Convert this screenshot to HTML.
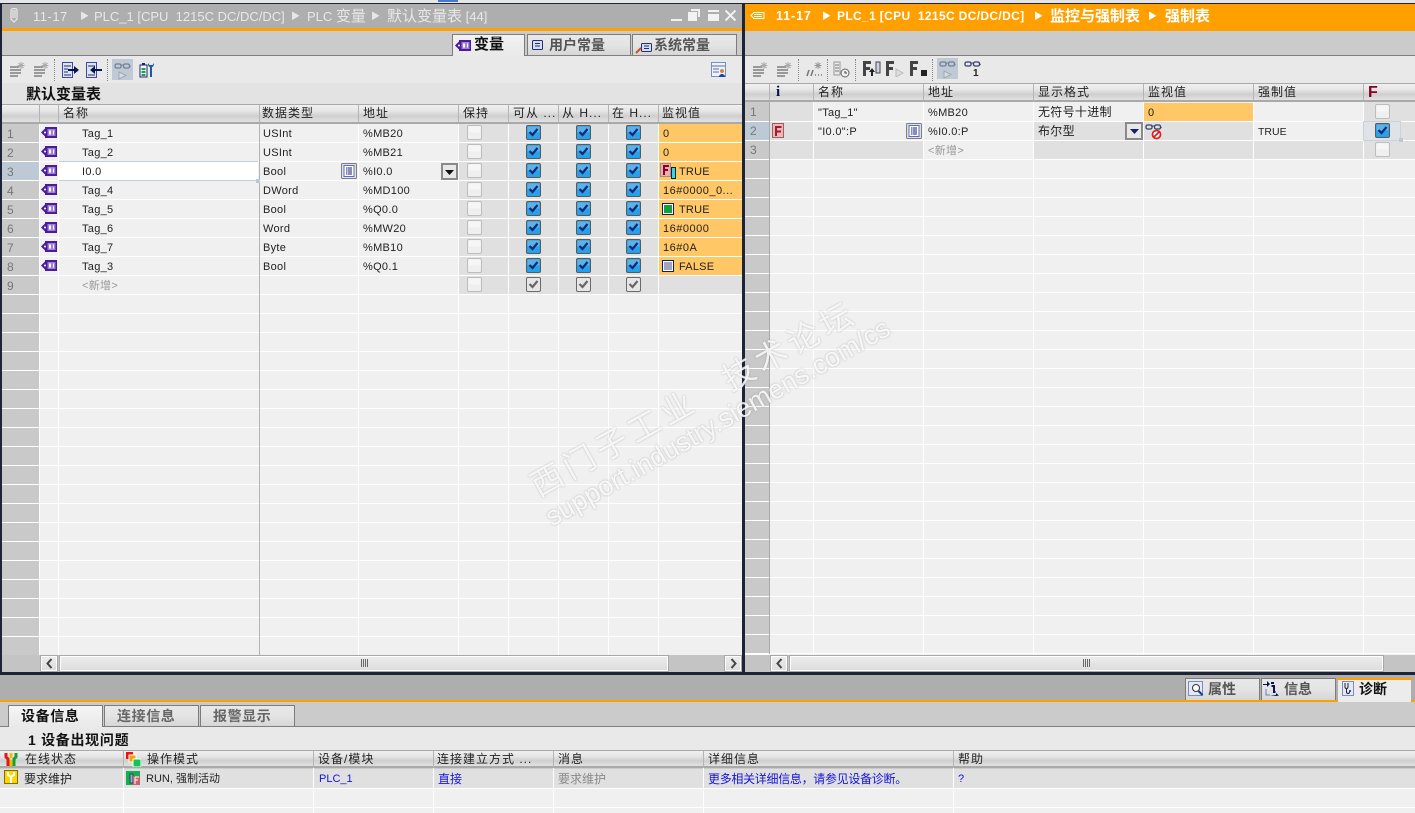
<!DOCTYPE html>
<html><head><meta charset="utf-8"><style>
html,body{margin:0;padding:0;width:1415px;height:813px;overflow:hidden;background:#cbcbcb}
body{position:relative;font:11px/19px "Liberation Sans","WenQuanYi Zen Hei","Noto Sans CJK SC",sans-serif;color:#222}
.a,.col,svg.a{position:absolute}
.z{font-family:"WenQuanYi Zen Hei","Noto Sans CJK SC",sans-serif}
.col{top:125px;white-space:nowrap;letter-spacing:.3px}
.col>*{display:block;height:19px}
.h{position:absolute;height:17px;line-height:17px;font-size:12px;letter-spacing:1px;white-space:nowrap;font-family:"Liberation Sans","WenQuanYi Zen Hei",sans-serif;color:#222}
.hb{position:absolute;height:17px;background:linear-gradient(#f0f0f0,#e6e6e6 35%,#cfcfcf 65%,#e2e2e2);border-top:1px solid #a9a9a9;border-bottom:2px solid #a9a9a9}
.v{position:absolute;width:1px;background:#fff}
.vh{position:absolute;width:1px;background:#b4b4b4}
.s{position:absolute;background:#e0e0e0}
.t{position:absolute;white-space:nowrap}
.title{position:absolute;top:7px;height:19px;line-height:19px;font-size:13px;white-space:nowrap;color:#e8e8e8}
.title b,.title i{font-size:15px;font-style:normal;font-weight:normal}
.rt{color:#fff;font-weight:bold}
.rt i{font-weight:bold}
.sep{position:absolute;width:1px;height:22px;top:59px;border-left:1px dotted #888}
.tab{position:absolute;box-sizing:border-box;background:linear-gradient(#e8e8e8,#e4e4e4 50%,#d6d6d6);border:1px solid #7c7c7c;border-bottom:0;font-size:14px;line-height:20px;color:#555;font-weight:bold;white-space:nowrap}
.btn{position:absolute;width:15px;height:15px;box-sizing:border-box;border:2px solid #8a8a8a;background:#e8e8e8}
.sb{position:absolute;box-sizing:border-box;height:17px;border:1px solid #a8a8a8;box-shadow:inset 0 0 0 1px #fff;background:linear-gradient(#ededed,#dcdcdc)}
</style></head><body>
<svg width="0" height="0" style="position:absolute"><defs>
<symbol id="ck" viewBox="0 0 15 15"><rect x=".5" y=".5" width="14" height="14" rx="1.5" fill="#1f9fe8" stroke="#5a5a5a"/><rect x="1.5" y="1.5" width="12" height="6" fill="#5fb0e6"/><rect x="1.5" y="8" width="12" height="5.5" fill="#2aa0e8"/><path d="M3.500 7l3 3 5-6" fill="none" stroke="#0a2a78" stroke-width="2.2"/></symbol>
<symbol id="gk" viewBox="0 0 15 15"><rect x=".5" y=".5" width="14" height="14" rx="1.5" fill="#e6e6e6" stroke="#6a6a6a"/><path d="M3.500 7l3 3 5-6" fill="none" stroke="#666" stroke-width="2.2"/></symbol>
<symbol id="em" viewBox="0 0 15 15"><rect x=".5" y=".5" width="14" height="14" rx="1.5" fill="#efefef" stroke="#bdbdbd"/><rect x="1.5" y="1.5" width="12" height="6" fill="#f6f6f6"/></symbol>
<symbol id="tag" viewBox="0 0 16 11"><path d="M0 5.500L4 1.500V0h12v11H4V9.500z" fill="#4a1d96"/><circle cx="4" cy="5.500" r="1" fill="#fff"/><rect x="6.500" y="2" width="8" height="7" fill="#a080d8"/><path d="M8 3.500h2v4H8zM12 3.500h1v4h-1z" fill="#fff"/></symbol>
<symbol id="add" viewBox="0 0 17 17"><path d="M1 6h9M1 9h11M1 12h11M1 15h8" stroke="#999" stroke-width="2" fill="none"/><path d="M12 1v7M8.500 4.500h7M9.500 2l5 5M14.500 2l-5 5" stroke="#aaa" fill="none"/></symbol>
<symbol id="gl" viewBox="0 0 17 9"><rect x="1" y="2" width="6" height="4" rx="1.500" fill="none" stroke="#36406c" stroke-width="1.300"/><rect x="9.500" y="2" width="6" height="4" rx="1.500" fill="none" stroke="#36406c" stroke-width="1.300"/><path d="M7 3h3M15 3l1.500 2" stroke="#36406c"/></symbol>
<symbol id="lst" viewBox="0 0 16 16"><rect x=".5" y=".5" width="15" height="15" rx="1" fill="#e0e0e0" stroke="#7f7f7f"/><rect x="3" y="2.500" width="10" height="11" fill="#fff" stroke="#5a6acb"/><path d="M5 5h6M5 7h6M5 9h6M5 11h6" stroke="#141e6e" stroke-dasharray="1 .5 4 0"/></symbol>
</defs></svg>

<!-- frame -->
<div class="a" style="left:0;top:0;width:1415px;height:3px;background:#e6e6e6"></div>
<div class="a" style="left:438px;top:0;width:20px;height:2px;background:#4a78c8"></div>
<div class="a" style="left:0;top:3px;width:1415px;height:1px;background:#1e2438"></div>
<div class="a" style="left:0;top:3px;width:2px;height:672px;background:#1e2438"></div>
<div class="a" style="left:742px;top:3px;width:3px;height:672px;background:#1e2438"></div>
<div class="a" style="left:0;top:672px;width:1415px;height:3px;background:#1e2438"></div>

<!-- LEFT title -->
<div class="a" style="left:2px;top:4px;width:740px;height:24px;background:#aeaeae"></div>
<div class="a" style="left:2px;top:28px;width:740px;height:3px;background:#ffa000"></div>
<div class="a" style="left:2px;top:31px;width:740px;height:24px;background:#cbcbcb"></div>
<div class="a" style="left:2px;top:55px;width:740px;height:1px;background:#7f7f7f"></div>
<div class="a" style="left:2px;top:56px;width:740px;height:27px;background:#e9e9e9"></div>
<div class="a" style="left:2px;top:83px;width:740px;height:22px;background:#e3e3e3"></div>
<svg class="a" style="left:9px;top:7px" width="10" height="17" viewBox="0 0 10 17"><path d="M2 3v9l3 3 3-3V3c0-2-6-2-6 0zM4 3v8M6 3v8" fill="none" stroke="#e8e8e8" stroke-width="1.200"/></svg>
<div class="title" style="left:33px;letter-spacing:.5px">11-17</div>
<div class="title" style="left:80px;font-size:9px">&#9654;</div>
<div class="title" style="left:94px">PLC_1 [CPU&nbsp; 1215C DC/DC/DC]</div>
<div class="title" style="left:291px;font-size:9px">&#9654;</div>
<div class="title" style="left:307px">PLC <b>变量</b></div>
<div class="title" style="left:371px;font-size:9px">&#9654;</div>
<div class="title" style="left:387px"><b>默认变量表</b> [44]</div>
<div class="a" style="left:671px;top:19px;width:11px;height:2px;background:#f2f2f2"></div>
<svg class="a" style="left:688px;top:9px" width="12" height="12" viewBox="0 0 12 12"><path d="M3 0h9v8h-2V2H3zM0 3h9v9H0z" fill="#f2f2f2"/></svg>
<svg class="a" style="left:708px;top:10px" width="11" height="11" viewBox="0 0 11 11"><path d="M0 0h11v11H0zM0 2v2h11V2z" fill="#f2f2f2" fill-rule="evenodd"/></svg>
<svg class="a" style="left:725px;top:10px" width="11" height="11" viewBox="0 0 11 11"><path d="M.5.500l10 10M10.500.500l-10 10" stroke="#f2f2f2" stroke-width="2"/></svg>

<!-- left tabs -->
<div class="tab" style="left:452px;top:34px;width:73px;height:22px;background:linear-gradient(#f2f2f2,#e9e9e9);color:#111;padding-left:21px;font-size:15px;z-index:2">变量</div>
<svg class="a" style="left:455px;top:40px;z-index:3" width="16" height="11"><use href="#tag"/></svg>
<div class="tab" style="left:527px;top:34px;width:104px;height:21px;padding-left:21px">用户常量</div>
<svg class="a" style="left:532px;top:40px" width="11" height="10" viewBox="0 0 11 10"><rect x=".5" y=".5" width="10" height="9" rx="1" fill="#d5dcf4" stroke="#20306e"/><path d="M3 3.500h5M3 6h5" stroke="#20306e"/></svg>
<div class="tab" style="left:632px;top:34px;width:105px;height:21px;padding-left:21px">系统常量</div>
<svg class="a" style="left:635px;top:43px" width="17" height="11" viewBox="0 0 17 11"><rect x="6.500" y=".5" width="10" height="8" rx="1" fill="#d5dcf4" stroke="#20306e"/><path d="M9 3h5M9 5.500h5" stroke="#20306e"/><path d="M1 10l5-5" stroke="#c9521a" stroke-width="2"/></svg>

<!-- left toolbar -->
<svg class="a" style="left:9px;top:61px" width="17" height="17"><use href="#add"/></svg>
<svg class="a" style="left:33px;top:61px" width="17" height="17"><use href="#add"/></svg>
<div class="sep" style="left:54px"></div>
<svg class="a" style="left:62px;top:62px" width="17" height="16" viewBox="0 0 17 16"><rect x=".5" y=".5" width="10" height="15" fill="#dfe5f8" stroke="#3c4a9a"/><path d="M2 4h7M2 7h4M2 10h4M2 13h7" stroke="#1e2a6e"/><path d="M6 7h6V4l5 4-5 4V9H6z" fill="#0a1450"/></svg>
<svg class="a" style="left:86px;top:62px" width="17" height="16" viewBox="0 0 17 16"><rect x=".5" y=".5" width="10" height="15" fill="#dfe5f8" stroke="#3c4a9a"/><path d="M2 4h7M2 13h7" stroke="#1e2a6e"/><path d="M16 7H9V4L4 8l5 4V9h7z" fill="#0a1450"/></svg>
<div class="sep" style="left:107px"></div>
<div class="a" style="left:112px;top:59px;width:21px;height:21px;background:#bfcad4"></div>
<svg class="a" style="left:114px;top:62px" width="17" height="9" opacity=".55"><use href="#gl"/></svg>
<svg class="a" style="left:118px;top:71px" width="9" height="9" viewBox="0 0 9 9"><path d="M1 1l7 3.500L1 8z" fill="#d8dde4" stroke="#9ca8b4"/></svg>
<svg class="a" style="left:139px;top:62px" width="16" height="16" viewBox="0 0 16 16"><rect x="1" y="3" width="7" height="12" fill="#fff" stroke="#1a2468"/><path d="M2.500 6h4v2h-4zM2.500 9h4v2h-4zM2.500 12h4v2h-4z" fill="#1aa050"/><path d="M3 1h3v2H3z" fill="#1a2468"/><path d="M9 1c0 3 1 4 2 4v10h2V5c1 0 2-1 2-4l-1.500 2h-3z" fill="#1a5aa0"/></svg>
<svg class="a" style="left:711px;top:62px" width="16" height="16" viewBox="0 0 16 16"><rect x=".5" y=".5" width="14" height="14" fill="#f0f3fb" stroke="#7c8cc0"/><path d="M1 4h13M2 7h6M2 10h6" stroke="#5a6ab0"/><circle cx="11" cy="9" r="2" fill="#c88a4a"/><path d="M8 15c0-4 6-4 6 0z" fill="#17479a"/></svg>

<div class="a z" style="left:26px;top:84px;font-size:15px;line-height:20px;font-weight:bold;color:#111">默认变量表</div>

<!-- left grid -->
<div class="a" style="left:2px;top:123px;width:38px;height:532px;background:#c9c9c9"></div>
<div class="a" style="left:40px;top:123px;width:702px;height:532px;background:#f0f0f0"></div>
<div class="s" style="left:459px;top:124px;width:199px;height:171px"></div>
<div class="a" style="left:659px;top:124px;width:83px;height:152px;background:#ffc766"></div>
<div class="a" style="left:659px;top:276px;width:83px;height:19px;background:#e0e0e0"></div>
<div class="a" style="left:2px;top:162px;width:37px;height:18px;background:#bdcad6"></div>
<div class="a" style="left:2px;top:124px;width:740px;height:531px;background-image:linear-gradient(transparent 18px,#fff 18px);background-size:100% 19px"></div>
<div class="v" style="left:39px;top:105px;height:550px"></div>
<div class="v" style="left:58px;top:105px;height:550px"></div>
<div class="a" style="left:259px;top:105px;width:1px;height:550px;background:#b4b4b4"></div>
<div class="v" style="left:358px;top:105px;height:550px"></div>
<div class="v" style="left:458px;top:105px;height:550px"></div>
<div class="v" style="left:508px;top:105px;height:550px"></div>
<div class="v" style="left:558px;top:105px;height:550px"></div>
<div class="v" style="left:608px;top:105px;height:550px"></div>
<div class="v" style="left:658px;top:105px;height:550px"></div>

<!-- left header -->
<div class="hb" style="left:2px;top:104px;width:740px"></div>
<div class="vh" style="left:39px;top:105px;height:17px"></div>
<div class="vh" style="left:58px;top:105px;height:17px"></div>
<div class="vh" style="left:259px;top:105px;height:17px"></div>
<div class="vh" style="left:358px;top:105px;height:17px"></div>
<div class="vh" style="left:458px;top:105px;height:17px"></div>
<div class="vh" style="left:508px;top:105px;height:17px"></div>
<div class="vh" style="left:558px;top:105px;height:17px"></div>
<div class="vh" style="left:608px;top:105px;height:17px"></div>
<div class="vh" style="left:658px;top:105px;height:17px"></div>
<div class="h" style="left:63px;top:105px">名称</div>
<div class="h" style="left:262px;top:105px">数据类型</div>
<div class="h" style="left:363px;top:105px">地址</div>
<div class="h" style="left:463px;top:105px">保持</div>
<div class="h" style="left:513px;top:105px">可从 ...</div>
<div class="h" style="left:562px;top:105px">从 H...</div>
<div class="h" style="left:612px;top:105px">在 H...</div>
<div class="h" style="left:662px;top:105px">监视值</div>

<!-- row 3 selected -->
<div class="a" style="left:59px;top:161px;width:199px;height:18px;background:#fff;border:1px solid #c2ced8;border-width:1px 0"></div>
<div class="a" style="left:256px;top:179px;width:4px;height:4px;background:#bcc9d4"></div>
<svg class="a" style="left:341px;top:162px" width="16" height="18"><use href="#lst"/></svg>
<div class="btn" style="left:441px;top:163px;width:17px;height:17px"></div>
<svg class="a" style="left:445px;top:170px" width="9" height="5"><path d="M0 0h9L4.500 5z" fill="#111"/></svg>

<!-- left columns -->
<div class="col" style="left:7px;color:#777;font-size:12px"><span>1</span><span>2</span><span>3</span><span>4</span><span>5</span><span>6</span><span>7</span><span>8</span><span>9</span></div>
<div class="col" style="left:41px;top:123px"><svg width="16" height="11"><use href="#tag"/></svg><svg width="16" height="11"><use href="#tag"/></svg><svg width="16" height="11"><use href="#tag"/></svg><svg width="16" height="11"><use href="#tag"/></svg><svg width="16" height="11"><use href="#tag"/></svg><svg width="16" height="11"><use href="#tag"/></svg><svg width="16" height="11"><use href="#tag"/></svg><svg width="16" height="11"><use href="#tag"/></svg></div>
<div class="col" style="left:82px"><span>Tag_1</span><span>Tag_2</span><span>I0.0</span><span>Tag_4</span><span>Tag_5</span><span>Tag_6</span><span>Tag_7</span><span>Tag_3</span><span style="color:#999">&lt;新增&gt;</span></div>
<div class="col" style="left:263px"><span>USInt</span><span>USInt</span><span>Bool</span><span>DWord</span><span>Bool</span><span>Word</span><span>Byte</span><span>Bool</span></div>
<div class="col" style="left:363px"><span>%MB20</span><span>%MB21</span><span>%I0.0</span><span>%MD100</span><span>%Q0.0</span><span>%MW20</span><span>%MB10</span><span>%Q0.1</span></div>
<div class="col" style="left:467px;top:123px"><svg width="15" height="15"><use href="#em"/></svg><svg width="15" height="15"><use href="#em"/></svg><svg width="15" height="15"><use href="#em"/></svg><svg width="15" height="15"><use href="#em"/></svg><svg width="15" height="15"><use href="#em"/></svg><svg width="15" height="15"><use href="#em"/></svg><svg width="15" height="15"><use href="#em"/></svg><svg width="15" height="15"><use href="#em"/></svg><svg width="15" height="15"><use href="#em"/></svg></div>
<div class="col" style="left:526px;top:123px"><svg width="15" height="15"><use href="#ck"/></svg><svg width="15" height="15"><use href="#ck"/></svg><svg width="15" height="15"><use href="#ck"/></svg><svg width="15" height="15"><use href="#ck"/></svg><svg width="15" height="15"><use href="#ck"/></svg><svg width="15" height="15"><use href="#ck"/></svg><svg width="15" height="15"><use href="#ck"/></svg><svg width="15" height="15"><use href="#ck"/></svg><svg width="15" height="15"><use href="#gk"/></svg></div>
<div class="col" style="left:576px;top:123px"><svg width="15" height="15"><use href="#ck"/></svg><svg width="15" height="15"><use href="#ck"/></svg><svg width="15" height="15"><use href="#ck"/></svg><svg width="15" height="15"><use href="#ck"/></svg><svg width="15" height="15"><use href="#ck"/></svg><svg width="15" height="15"><use href="#ck"/></svg><svg width="15" height="15"><use href="#ck"/></svg><svg width="15" height="15"><use href="#ck"/></svg><svg width="15" height="15"><use href="#gk"/></svg></div>
<div class="col" style="left:626px;top:123px"><svg width="15" height="15"><use href="#ck"/></svg><svg width="15" height="15"><use href="#ck"/></svg><svg width="15" height="15"><use href="#ck"/></svg><svg width="15" height="15"><use href="#ck"/></svg><svg width="15" height="15"><use href="#ck"/></svg><svg width="15" height="15"><use href="#ck"/></svg><svg width="15" height="15"><use href="#ck"/></svg><svg width="15" height="15"><use href="#ck"/></svg><svg width="15" height="15"><use href="#gk"/></svg></div>
<div class="col" style="left:663px;letter-spacing:.5px"><span>0</span><span>0</span><span style="padding-left:16px;letter-spacing:.2px">TRUE</span><span>16#0000_0...</span><span style="padding-left:16px;letter-spacing:.2px">TRUE</span><span>16#0000</span><span>16#0A</span><span style="padding-left:16px;letter-spacing:.2px">FALSE</span></div>
<svg class="a" style="left:660px;top:163px" width="17" height="16" viewBox="0 0 17 16"><rect x=".5" y=".5" width="10" height="13" fill="#e8b0b0" stroke="#a88"/><path d="M3 2h6v2H5v2h3v2H5v4H3z" fill="#8c0028"/><rect x="11.500" y="4.500" width="4" height="11" fill="#36d8dc" stroke="#123"/></svg>
<svg class="a" style="left:662px;top:203px" width="12" height="12"><rect x=".5" y=".5" width="11" height="11" fill="#fff" stroke="#10205c"/><rect x="2" y="2" width="8" height="8" fill="#12a03c"/></svg>
<svg class="a" style="left:662px;top:260px" width="12" height="12"><rect x=".5" y=".5" width="11" height="11" fill="#fff" stroke="#10205c"/><rect x="2" y="2" width="8" height="8" fill="#a0a4c4"/></svg>

<!-- left scrollbar -->
<div class="a" style="left:2px;top:655px;width:740px;height:17px;background:#c4c4c4"></div>
<div class="sb" style="left:40px;top:655px;width:18px"></div>
<svg class="a" style="left:46px;top:658px" width="7" height="11"><path d="M5.500 1L1.500 5.500l4 4.500" fill="none" stroke="#444" stroke-width="2"/></svg>
<div class="sb" style="left:59px;top:655px;width:610px"></div>
<div class="a" style="left:361px;top:659px;width:7px;height:8px;background:repeating-linear-gradient(90deg,#666 0 1px,transparent 1px 2px)"></div>
<div class="sb" style="left:724px;top:655px;width:18px"></div>
<svg class="a" style="left:730px;top:658px" width="7" height="11"><path d="M1.500 1l4 4.500-4 4.500" fill="none" stroke="#444" stroke-width="2"/></svg>

<!-- RIGHT -->
<div class="a" style="left:745px;top:4px;width:670px;height:27px;background:#ffa000"></div>
<div class="a" style="left:745px;top:31px;width:670px;height:24px;background:#cbcbcb"></div>
<div class="a" style="left:745px;top:55px;width:670px;height:1px;background:#7f7f7f"></div>
<div class="a" style="left:745px;top:56px;width:670px;height:27px;background:#e9e9e9"></div>
<svg class="a" style="left:750px;top:10px" width="15" height="11" viewBox="0 0 15 11"><path d="M14 2.500H4L1 5.500l3 3h10zM4 4.500h8M4 6.500h8" fill="none" stroke="#fff"/></svg>
<div class="title rt" style="left:776px;font-size:12.500px;letter-spacing:.9px">11-17</div>
<div class="title" style="left:822px;font-size:9px;color:#fff">&#9654;</div>
<div class="title rt" style="left:837px;font-size:12px;letter-spacing:.35px">PLC_1 [CPU&nbsp; 1215C DC/DC/DC]</div>
<div class="title" style="left:1034px;font-size:9px;color:#fff">&#9654;</div>
<div class="title rt" style="left:1050px"><i>监控与强制表</i></div>
<div class="title" style="left:1148px;font-size:9px;color:#fff">&#9654;</div>
<div class="title rt" style="left:1165px"><i>强制表</i></div>

<!-- right toolbar -->
<svg class="a" style="left:752px;top:61px" width="17" height="17"><use href="#add"/></svg>
<svg class="a" style="left:776px;top:61px" width="17" height="17"><use href="#add"/></svg>
<div class="sep" style="left:798px"></div>
<svg class="a" style="left:806px;top:61px" width="17" height="17" viewBox="0 0 17 17"><path d="M1 15l2-6M5 15l2-6M9 14h1M12 14h1M15 14h1" stroke="#777" stroke-width="1.500" fill="none"/><path d="M12 1v7M8.500 4.500h7M9.500 2l5 5M14.500 2l-5 5" stroke="#999" fill="none"/></svg>
<div class="sep" style="left:827px"></div>
<svg class="a" style="left:833px;top:61px" width="18" height="17" viewBox="0 0 18 17"><rect x="1" y="1" width="6" height="13" fill="none" stroke="#999"/><path d="M2 4h4M2 7h4M2 10h4" stroke="#777"/><circle cx="12" cy="12" r="4" fill="#eee" stroke="#666"/><path d="M12 10v2h2" stroke="#444" fill="none"/></svg>
<div class="sep" style="left:855px"></div>
<svg class="a" style="left:863px;top:61px" width="18" height="16" viewBox="0 0 18 16"><path d="M0 0h8v3H3v3h4v3H3v6H0z" fill="#444"/><path d="M6 11l3-4 3 4h-2v4H8v-4z" fill="#222"/><rect x="13" y="1" width="4" height="11" fill="#cfd3dc" stroke="#445"/></svg>
<svg class="a" style="left:886px;top:61px" width="18" height="16" viewBox="0 0 18 16"><path d="M0 0h8v3H3v3h4v3H3v6H0z" fill="#444"/><path d="M10 8l7 4-7 4z" fill="#ddd" stroke="#bbb"/></svg>
<svg class="a" style="left:910px;top:61px" width="18" height="16" viewBox="0 0 18 16"><path d="M0 0h8v3H3v3h4v3H3v6H0z" fill="#444"/><rect x="11" y="9" width="6" height="6" fill="#222"/></svg>
<div class="sep" style="left:932px"></div>
<div class="a" style="left:937px;top:58px;width:21px;height:21px;background:#bfcad4"></div>
<svg class="a" style="left:939px;top:60px" width="17" height="9" opacity=".55"><use href="#gl"/></svg>
<svg class="a" style="left:943px;top:70px" width="9" height="9" viewBox="0 0 9 9"><path d="M1 1l7 3.500L1 8z" fill="#d8dde4" stroke="#9ca8b4"/></svg>
<svg class="a" style="left:964px;top:60px" width="17" height="9"><use href="#gl"/></svg>
<div class="a" style="left:973px;top:68px;font:bold 10px/11px 'Liberation Sans',sans-serif;color:#222">1</div>

<!-- right grid -->
<div class="a" style="left:745px;top:102px;width:670px;height:553px;background:#f0f0f0"></div>
<div class="a" style="left:745px;top:102px;width:25px;height:553px;background:#c9c9c9"></div>
<div class="a" style="left:745px;top:122px;width:24px;height:18px;background:#bdcad6"></div>
<div class="s" style="left:770px;top:102px;width:43px;height:57px"></div>
<div class="s" style="left:813px;top:141px;width:110px;height:18px"></div>
<div class="s" style="left:1034px;top:122px;width:110px;height:37px"></div>
<div class="s" style="left:1144px;top:122px;width:110px;height:37px"></div>
<div class="s" style="left:1254px;top:141px;width:110px;height:18px"></div>
<div class="s" style="left:1364px;top:102px;width:51px;height:57px"></div>
<div class="a" style="left:1144px;top:103px;width:110px;height:18px;background:#ffc766"></div>
<div class="a" style="left:745px;top:103px;width:670px;height:552px;background-image:linear-gradient(transparent 18px,#fff 18px);background-size:100% 19px"></div>
<div class="v" style="left:769px;top:84px;height:571px;background:#aaa"></div>
<div class="v" style="left:813px;top:84px;height:571px"></div>
<div class="v" style="left:923px;top:84px;height:571px"></div>
<div class="v" style="left:1033px;top:84px;height:571px"></div>
<div class="v" style="left:1143px;top:84px;height:571px"></div>
<div class="v" style="left:1253px;top:84px;height:571px"></div>
<div class="v" style="left:1363px;top:84px;height:571px"></div>

<div class="hb" style="left:745px;top:83px;width:670px;height:16px"></div>
<div class="vh" style="left:769px;top:84px;height:17px"></div>
<div class="vh" style="left:813px;top:84px;height:17px"></div>
<div class="vh" style="left:923px;top:84px;height:17px"></div>
<div class="vh" style="left:1033px;top:84px;height:17px"></div>
<div class="vh" style="left:1143px;top:84px;height:17px"></div>
<div class="vh" style="left:1253px;top:84px;height:17px"></div>
<div class="vh" style="left:1363px;top:84px;height:17px"></div>
<div class="a" style="left:776px;top:84px;font:bold 15px/17px 'Liberation Serif',serif;color:#0c1450">i</div>
<div class="h" style="left:818px;top:84px">名称</div>
<div class="h" style="left:928px;top:84px">地址</div>
<div class="h" style="left:1038px;top:84px">显示格式</div>
<div class="h" style="left:1148px;top:84px">监视值</div>
<div class="h" style="left:1258px;top:84px">强制值</div>
<div class="a" style="left:1368px;top:84px;font:bold 16px/18px 'Liberation Sans',sans-serif;color:#8c0028">F</div>

<div class="col" style="left:750px;top:103px;color:#777;font-size:12px"><span>1</span><span>2</span><span>3</span></div>
<svg class="a" style="left:772px;top:123px" width="12" height="15" viewBox="0 0 12 15"><rect x=".5" y=".5" width="11" height="14" fill="#eab8b8" stroke="#a06060"/><path d="M3 3h6.500v2H5v2.500h4v2H5V13H3z" fill="#a81830"/></svg>
<div class="col" style="left:818px;top:104px"><span>"Tag_1"</span><span>"I0.0":P</span></div>
<svg class="a" style="left:906px;top:123px" width="16" height="16"><use href="#lst"/></svg>
<div class="col" style="left:928px;top:104px"><span>%MB20</span><span>%I0.0:P</span><span style="color:#999">&lt;新增&gt;</span></div>
<div class="col" style="left:1038px;top:103px;font-size:12px"><span>无符号十进制</span><span>布尔型</span></div>
<div class="btn" style="left:1125px;top:122px;width:18px;height:18px"></div>
<svg class="a" style="left:1130px;top:129px" width="9" height="5"><path d="M0 0h9L4.500 5z" fill="#141e78"/></svg>
<div class="col" style="left:1148px;top:104px"><span>0</span></div>
<svg class="a" style="left:1145px;top:123px" width="17" height="9"><use href="#gl"/></svg>
<svg class="a" style="left:1151px;top:129px" width="11" height="11" viewBox="0 0 11 11"><circle cx="5.500" cy="5.500" r="4" fill="#fff" stroke="#e02020" stroke-width="1.800"/><path d="M2.500 8.500l6-6" stroke="#e02020" stroke-width="1.800"/></svg>
<div class="col" style="left:1258px;top:123px;font-size:10.500px;letter-spacing:0"><span>TRUE</span></div>
<div class="a" style="left:1363px;top:121px;width:38px;height:20px;box-sizing:border-box;background:#dfe3e8;border:1px solid #c8d3dc"></div>
<div class="a" style="left:1399px;top:138px;width:4px;height:4px;background:#bcc9d4"></div>
<div class="col" style="left:1375px;top:102px"><svg width="15" height="15"><use href="#em"/></svg><svg width="15" height="15"><use href="#ck"/></svg><svg width="15" height="15"><use href="#em"/></svg></div>

<!-- right scrollbar -->
<div class="a" style="left:745px;top:655px;width:670px;height:17px;background:#c4c4c4"></div>
<div class="a" style="left:745px;top:654px;width:25px;height:1px;background:#fff"></div>
<div class="sb" style="left:770px;top:655px;width:18px"></div>
<svg class="a" style="left:776px;top:658px" width="7" height="11"><path d="M5.500 1L1.500 5.500l4 4.500" fill="none" stroke="#444" stroke-width="2"/></svg>
<div class="sb" style="left:789px;top:655px;width:595px"></div>
<div class="a" style="left:1083px;top:659px;width:7px;height:8px;background:repeating-linear-gradient(90deg,#666 0 1px,transparent 1px 2px)"></div>

<!-- watermark -->
<div class="a z" style="left:541px;top:466px;font-size:32px;line-height:36px;letter-spacing:5px;white-space:nowrap;color:rgba(255,255,255,.85);text-shadow:0 0 2px rgba(90,90,90,.4);transform-origin:0 100%;transform:rotate(-29deg);z-index:9">西门子工业&nbsp;<span style="display:inline-block;width:22px"></span>技术论坛</div>
<div class="a" style="left:555px;top:502px;font-size:27px;line-height:30px;white-space:nowrap;color:rgba(255,255,255,.85);text-shadow:0 0 2px rgba(90,90,90,.4);transform-origin:0 100%;transform:rotate(-29.600deg);z-index:9">support.industry.siemens.com/cs</div>

<!-- BOTTOM -->
<div class="a" style="left:0;top:675px;width:1415px;height:25px;background:#aeaeae"></div>
<div class="a" style="left:0;top:700px;width:1415px;height:2px;background:#ffa000"></div>
<div class="a" style="left:0;top:702px;width:1415px;height:24px;background:#cbcbcb"></div>
<div class="a" style="left:0;top:726px;width:1415px;height:1px;background:#7f7f7f"></div>
<div class="a" style="left:0;top:727px;width:1415px;height:23px;background:#e9e9e9"></div>

<div class="tab" style="left:1185px;top:678px;width:75px;height:22px;padding-left:22px">属性</div>
<svg class="a" style="left:1188px;top:681px" width="16" height="15" viewBox="0 0 16 15"><rect x=".5" y=".5" width="14" height="14" fill="#e4e9fa" stroke="#7c8cc0"/><circle cx="8" cy="7" r="3.500" fill="#fff" stroke="#333"/><path d="M10.500 10l4 4" stroke="#1a3a90" stroke-width="2"/></svg>
<div class="tab" style="left:1261px;top:678px;width:75px;height:22px;padding-left:22px">信息</div>
<svg class="a" style="left:1263px;top:681px" width="17" height="15" viewBox="0 0 17 15"><path d="M0 3h4V0l3 3-3 3V4H0zM7 14h6v-2l3 2.500-3 .5z" fill="#0a1450"/><path d="M8 2h3M8.500 5H11v6h1.500" stroke="#0a1450" stroke-width="2" fill="none"/><path d="M3 8v6h4" stroke="#6a7cd0" fill="none"/></svg>
<div class="a" style="left:1337px;top:678px;width:75px;height:2px;background:#ffa000"></div>
<div class="tab" style="left:1338px;top:680px;width:73px;height:22px;border:0;background:#ececec;padding-left:21px;color:#111;line-height:19px">诊断</div>
<svg class="a" style="left:1342px;top:681px" width="12" height="15" viewBox="0 0 12 15"><rect x=".5" y=".5" width="11" height="14" fill="#e4e9fa" stroke="#7c8cc0"/><path d="M3 2v4c0 2 3 2 3 0V2M4.500 7v4c0 2 3 2 3 0" fill="none" stroke="#222"/><circle cx="8" cy="10" r="1" fill="#222"/></svg>

<div class="tab" style="left:8px;top:705px;width:95px;height:22px;background:linear-gradient(#f5f5f5,#e9e9e9);color:#111;padding-left:12px;letter-spacing:.6px;z-index:2">设备信息</div>
<div class="tab" style="left:104px;top:705px;width:95px;height:21px;padding-left:12px;letter-spacing:.6px;color:#666">连接信息</div>
<div class="tab" style="left:200px;top:705px;width:95px;height:21px;padding-left:12px;letter-spacing:.6px;color:#666">报警显示</div>

<div class="a" style="left:28px;top:730px;font-size:14px;line-height:20px;font-weight:bold;letter-spacing:.7px;color:#111;white-space:nowrap">1 设备出现问题</div>

<div class="a" style="left:0;top:769px;width:1415px;height:44px;background:#f0f0f0"></div>
<div class="s" style="left:0;top:769px;width:1415px;height:19px"></div>
<div class="a" style="left:0;top:788px;width:1415px;height:1px;background:#fff"></div>
<div class="a" style="left:0;top:807px;width:1415px;height:1px;background:#fff"></div>
<div class="v" style="left:123px;top:768px;height:45px"></div>
<div class="v" style="left:313px;top:768px;height:45px"></div>
<div class="v" style="left:433px;top:768px;height:45px"></div>
<div class="v" style="left:553px;top:768px;height:45px"></div>
<div class="v" style="left:703px;top:768px;height:45px"></div>
<div class="v" style="left:953px;top:768px;height:45px"></div>
<div class="hb" style="left:0;top:750px;width:1415px;height:15px"></div>
<div class="vh" style="left:123px;top:751px;height:17px"></div>
<div class="vh" style="left:313px;top:751px;height:17px"></div>
<div class="vh" style="left:433px;top:751px;height:17px"></div>
<div class="vh" style="left:553px;top:751px;height:17px"></div>
<div class="vh" style="left:703px;top:751px;height:17px"></div>
<div class="vh" style="left:953px;top:751px;height:17px"></div>
<svg class="a" style="left:3px;top:752px" width="16" height="15" viewBox="0 0 16 15"><path d="M3 1v4l2 2v7" fill="none" stroke="#e01818" stroke-width="3"/><path d="M8 1v5M8 8v6" fill="none" stroke="#f0c000" stroke-width="3"/><path d="M13 1v4l-2 2v7" fill="none" stroke="#18a030" stroke-width="3"/></svg>
<div class="h" style="left:25px;top:751px">在线状态</div>
<svg class="a" style="left:126px;top:752px" width="15" height="15"><rect x="0" y="0" width="7" height="7" fill="#f01010"/><rect x="3" y="3" width="7" height="7" fill="#f0a000" stroke="#fff"/><rect x="7" y="7" width="8" height="8" fill="#10c850" stroke="#fff"/></svg>
<div class="h" style="left:147px;top:751px">操作模式</div>
<div class="h" style="left:318px;top:751px">设备/模块</div>
<div class="h" style="left:437px;top:751px">连接建立方式 ...</div>
<div class="h" style="left:558px;top:751px">消息</div>
<div class="h" style="left:708px;top:751px">详细信息</div>
<div class="h" style="left:958px;top:751px">帮助</div>

<svg class="a" style="left:4px;top:770px" width="15" height="16" viewBox="0 0 15 16"><rect x=".5" y=".5" width="13" height="13" fill="#f8d800" stroke="#886c00"/><path d="M4 2v3l3 2 3-2V2M7 7v6" fill="none" stroke="#fff" stroke-width="2"/></svg>
<div class="t" style="left:24px;top:770px;font-size:12px">要求维护</div>
<svg class="a" style="left:126px;top:771px" width="15" height="15" viewBox="0 0 15 15"><rect width="14" height="14" fill="#12b050"/><rect x="4" y="3" width="3" height="9" fill="#8ab0d0" stroke="#345"/><rect x="7" y="5" width="7" height="9" fill="#c8606e"/><path d="M9 6h4M9 6v7M9 9h3" stroke="#fff"/></svg>
<div class="t" style="left:146px;top:770px">RUN, 强制活动</div>
<div class="t" style="left:319px;top:770px;color:#1414e0">PLC_1</div>
<div class="t" style="left:438px;top:770px;color:#1414e0;font-size:12px">直接</div>
<div class="t" style="left:558px;top:770px;color:#8a8a8a;font-size:12px">要求维护</div>
<div class="t" style="left:708px;top:770px;color:#1414e0;font-size:12px;letter-spacing:-.3px">更多相关详细信息，请参见设备诊断。</div>
<div class="t" style="left:958px;top:770px;color:#1414e0">?</div>
</body></html>
